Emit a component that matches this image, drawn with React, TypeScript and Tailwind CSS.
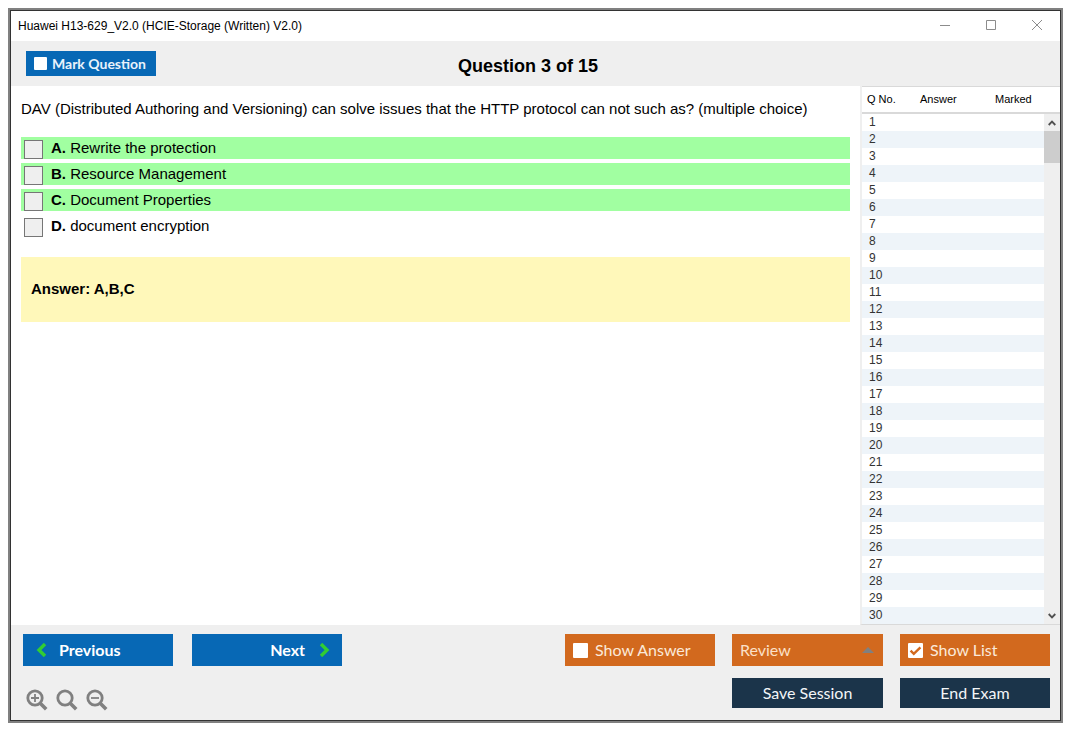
import { useState } from "react";

const options = [
  { letter: "A", text: "Rewrite the protection", correct: true },
  { letter: "B", text: "Resource Management", correct: true },
  { letter: "C", text: "Document Properties", correct: true },
  { letter: "D", text: "document encryption", correct: false },
];

const questionNumbers = Array.from({ length: 30 }, (_, i) => i + 1);

function TitleBar() {
  return (
    <header className="flex h-[30px] items-center justify-between bg-white pl-[7px] pr-[17px]">
      <h1 className="text-xs text-black">Huawei H13-629_V2.0 (HCIE-Storage (Written) V2.0)</h1>
      <div className="flex gap-[34px] text-[#8c8c8c]">
        <button type="button" aria-label="Minimize">
          <svg width="12" height="12" viewBox="0 0 12 12" stroke="currentColor">
            <path d="M1 5.5h10" />
          </svg>
        </button>
        <button type="button" aria-label="Maximize">
          <svg width="12" height="12" viewBox="0 0 12 12" fill="none" stroke="currentColor">
            <path d="M1.5.5h9v9h-9z" />
          </svg>
        </button>
        <button type="button" aria-label="Close">
          <svg width="12" height="12" viewBox="0 0 12 12" stroke="currentColor">
            <path d="M1 0l10 10M11 0L1 10" />
          </svg>
        </button>
      </div>
    </header>
  );
}

function QuestionHeader() {
  return (
    <div className="grid h-[45px] grid-cols-[1fr_auto_1fr] items-center bg-[#efefef] pl-[15px] pr-[30px]">
      <label className="flex h-[25px] w-[130px] items-center gap-[5px] bg-[#0768b5] pl-2 font-['Lato',sans-serif] text-sm font-bold text-[#e9f2fb]">
        <input type="checkbox" className="size-[13px] appearance-none rounded-[1px] bg-white" />
        Mark Question
      </label>
      <h2 className="pt-1 text-lg font-bold text-black">Question 3 of 15</h2>
    </div>
  );
}

function Question() {
  return (
    <main className="flex-1 bg-white px-[10px] pt-3 text-[15px] text-black">
      <p className="leading-[22px]">
        DAV (Distributed Authoring and Versioning) can solve issues that the HTTP protocol can not such as? (multiple choice)
      </p>

      <ul className="mt-[17px] space-y-1">
        {options.map((option) => (
          <li key={option.letter} className={option.correct ? "bg-[#a1ffa1]" : ""}>
            <label className="flex h-[22px] pl-[3px] leading-[22px]">
              <input
                type="checkbox"
                className="mr-2 mt-[3px] size-[19px] shrink-0 appearance-none border border-[#767676] bg-[#efefef] checked:bg-[#767676]"
              />
              <span>
                <b>{option.letter}.</b> {option.text}
              </span>
            </label>
          </li>
        ))}
      </ul>

      <div className="mt-5 bg-[#fff8ba] px-[10px] pb-[22px] pt-5 font-bold leading-[23px]">Answer: A,B,C</div>
    </main>
  );
}

function QuestionList() {
  return (
    <aside className="relative w-[200px] shrink-0 border-b border-l-2 border-[#d9d9d9] border-l-[#efefef] bg-white text-[#333]">
      <table className="w-full table-fixed border-collapse text-left">
        <thead>
          <tr className="h-[26px] border-b-2 border-t border-[#d9d9d9] text-[11px] text-black">
            <th className="w-[58px] pl-[5px] font-normal">Q No.</th>
            <th className="w-[75px] font-normal">Answer</th>
            <th className="font-normal">Marked</th>
          </tr>
        </thead>
        <tbody>
          {questionNumbers.map((n) => (
            <tr key={n} className="h-[17px] text-xs leading-[17px] even:bg-[#eef4f9]">
              <td className="py-0 pl-[7px]">{n}</td>
              <td></td>
              <td></td>
            </tr>
          ))}
        </tbody>
      </table>

      <div className="absolute bottom-0 right-0 top-7 flex w-4 flex-col items-center justify-between bg-[#efefef] text-[#505050]">
        <div className="w-full">
          <button type="button" aria-label="Scroll up" className="flex h-[17px] w-full items-center justify-center">
            <svg width="8" height="6" viewBox="0 0 8 6" fill="none" stroke="currentColor" strokeWidth="1.8">
              <path d="M.7 5L4 1.6 7.3 5" />
            </svg>
          </button>
          <div className="h-8 bg-[#cdcdcd]"></div>
        </div>
        <button type="button" aria-label="Scroll down" className="flex h-[17px] w-full items-center justify-center">
          <svg width="8" height="6" viewBox="0 0 8 6" fill="none" stroke="currentColor" strokeWidth="1.8">
            <path d="M.7 1L4 4.4 7.3 1" />
          </svg>
        </button>
      </div>
    </aside>
  );
}

type ToggleProps = { label: string; checked: boolean; onChange: (checked: boolean) => void };

function Toggle({ label, checked, onChange }: ToggleProps) {
  return (
    <label className="flex h-8 w-[150px] items-center gap-[7px] bg-[#d2691e] pl-2 text-[#fbe9da]">
      <span className="grid">
        <input
          type="checkbox"
          checked={checked}
          onChange={(e) => onChange(e.target.checked)}
          className="peer col-start-1 row-start-1 size-[15px] appearance-none rounded-[1px] bg-white"
        />
        <svg
          className="pointer-events-none invisible col-start-1 row-start-1 peer-checked:visible"
          width="15"
          height="15"
          viewBox="0 0 15 15"
          fill="none"
          stroke="#d2691e"
          strokeWidth="2.4"
        >
          <path d="M2.6 7.6l3.2 3.2 6.6-6.4" />
        </svg>
      </span>
      {label}
    </label>
  );
}

function ZoomButton({ label, sign }: { label: string; sign?: string }) {
  return (
    <button type="button" aria-label={label}>
      <svg width="22" height="22" viewBox="0 0 22 22" fill="none" stroke="#808080">
        <circle cx="9" cy="9" r="7.2" strokeWidth="2.8" />
        <path d="M14.2 14.2l6 6" strokeWidth="3.6" />
        {sign && <path d={sign} strokeWidth="1.8" />}
      </svg>
    </button>
  );
}

export default function App() {
  const [showAnswer, setShowAnswer] = useState(false);
  const [showList, setShowList] = useState(true);

  return (
    <div className="flex min-h-screen bg-white pb-3 pl-2 pr-3 pt-2 font-['Liberation_Sans',Arial,sans-serif]">
      <div className="flex flex-1 flex-col border-2 border-[#808080]">
        <div className="flex flex-1 flex-col border border-[#333]">
          <TitleBar />
          <QuestionHeader />

          <div className="flex flex-1">
            <Question />
            {showList && <QuestionList />}
          </div>

          <footer className="flex justify-between bg-[#efefef] pb-[9px] pl-3 pr-[10px] pt-[9px] font-['Lato',sans-serif] text-base">
            <div>
              <div className="flex gap-[19px] font-bold text-white">
                <button type="button" className="flex h-8 w-[150px] items-center gap-3 bg-[#0768b5] pl-[13px]">
                  <svg width="11" height="14" viewBox="0 0 11 14" fill="none" stroke="#32cd32" strokeWidth="3.4">
                    <path d="M9 1L3 7l6 6" />
                  </svg>
                  Previous
                </button>
                <button type="button" className="flex h-8 w-[150px] items-center justify-end gap-[14px] bg-[#0768b5] pr-3">
                  Next
                  <svg width="11" height="14" viewBox="0 0 11 14" fill="none" stroke="#32cd32" strokeWidth="3.4">
                    <path d="M2 1l6 6-6 6" />
                  </svg>
                </button>
              </div>
              <div className="mt-[23px] flex gap-2 pl-[3px]">
                <ZoomButton label="Zoom in" sign="M5 9h8M9 5v8" />
                <ZoomButton label="Reset zoom" />
                <ZoomButton label="Zoom out" sign="M5 9h8" />
              </div>
            </div>

            <div className="flex flex-col items-end gap-3">
              <div className="flex gap-[17px]">
                <Toggle label="Show Answer" checked={showAnswer} onChange={setShowAnswer} />
                <div className="relative">
                  <select
                    aria-label="Review"
                    className="h-8 w-[151px] appearance-none bg-[#d2691e] pl-2 text-[#fbe0c8]"
                  >
                    <option>Review</option>
                  </select>
                  <svg className="pointer-events-none absolute right-[9px] top-[13px]" width="12" height="6" viewBox="0 0 12 6">
                    <path d="M6 0l6 6H0z" fill="#808080" />
                  </svg>
                </div>
                <Toggle label="Show List" checked={showList} onChange={setShowList} />
              </div>
              <div className="flex gap-[17px] text-[#f3f6f8]">
                <button type="button" className="h-[30px] w-[151px] bg-[#1b344a]">
                  Save Session
                </button>
                <button type="button" className="h-[30px] w-[150px] bg-[#1b344a]">
                  End Exam
                </button>
              </div>
            </div>
          </footer>
        </div>
      </div>
    </div>
  );
}
